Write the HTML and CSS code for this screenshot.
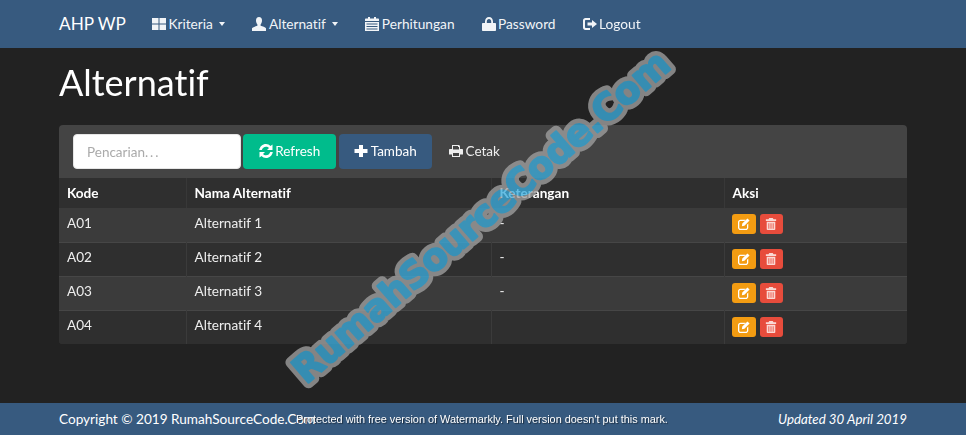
FILE: index.html
```html
<!DOCTYPE html>
<html lang="id">
<head>
<meta charset="utf-8">
<title>Alternatif</title>
<link rel="stylesheet" href="styles.css">
</head>
<body>
<svg class="defs" width="0" height="0" aria-hidden="true">
  <symbol id="i-th" viewBox="0 0 14 14"><path d="M0 1h6.500v5.500H0zM7.500 1H14v5.500H7.500zM0 7.500h6.500V13H0zM7.500 7.500H14V13H7.500z"/></symbol>
  <symbol id="i-user" viewBox="0 0 14 14"><path d="M7 0c2 0 3 1.500 3 3.400 0 1.700-.7 3.200-1.400 4.100v1.300c1.800.6 4.800 1.300 5.400 2.500V14H0v-2.700c.6-1.200 3.600-1.900 5.400-2.500V7.500C4.700 6.600 4 5.100 4 3.400 4 1.500 5 0 7 0z"/></symbol>
  <symbol id="i-cal" viewBox="0 0 14 14"><path fill-rule="evenodd" d="M3 0h2v1.500h4V0h2v1.500h2c.6 0 1 .4 1 1V4H0V2.500c0-.6.400-1 1-1h2zM0 5h14v9H0zM1.500 6.500v1h11v-1zM1.500 9v1h11V9zM1.500 11.500v1h11v-1z"/></symbol>
  <symbol id="i-lock" viewBox="0 0 14 14"><path fill-rule="evenodd" d="M1 6h2V4.500C3 1.800 4.600 0 7 0s4 1.800 4 4.500V6h2c.6 0 1 .4 1 1v6c0 .6-.4 1-1 1H1c-.6 0-1-.4-1-1V7c0-.6.400-1 1-1zm3.800 0h4.400V4.500C9.200 3 8.400 2 7 2S4.800 3 4.800 4.500z"/></symbol>
  <symbol id="i-out" viewBox="0 0 14 14"><path d="M2.500 1H7v2H3c-.6 0-1 .4-1 1v6c0 .6.400 1 1 1h4v2H2.500C1 13 0 12 0 10.500v-7C0 2 1 1 2.500 1zM9 3l5 4-5 4V8.500H4.500v-3H9z"/></symbol>
  <symbol id="i-refresh" viewBox="0 0 14 14"><path d="M7 0c1.800 0 3.400.8 4.500 2L13.500.5V6H8l2-2c-.7-.8-1.800-1.300-3-1.300C5 2.700 3.300 4 2.800 6H.2C.7 2.600 3.500 0 7 0zM.5 8H6l-2 2c.7.8 1.800 1.300 3 1.300 2 0 3.700-1.300 4.200-3.300h2.600c-.5 3.400-3.300 6-6.800 6-1.800 0-3.400-.8-4.500-2L.5 13.500z"/></symbol>
  <symbol id="i-plus" viewBox="0 0 14 14"><path d="M5 1h4v4h4.500v4H9v4H5V9H.5V5H5z"/></symbol>
  <symbol id="i-print" viewBox="0 0 14 14"><path fill-rule="evenodd" d="M3 1h7l1 1v3h2c.6 0 1 .4 1 1v4.500h-3V13H3v-2.500H0V6c0-.6.400-1 1-1h2zm1 1v3.500h6V3H9V2zm0 7v3h6V9z"/></symbol>
  <symbol id="i-edit" viewBox="0 0 14 14"><path d="M3 2h6L7.500 3.500H3c-.8 0-1.500.7-1.500 1.500v6c0 .8.700 1.500 1.500 1.500h6c.8 0 1.500-.7 1.500-1.500V8L12 6.500V11c0 1.700-1.300 3-3 3H3c-1.700 0-3-1.300-3-3V5c0-1.700 1.300-3 3-3zM11 .5L13.500 3 7.500 9 4.500 9.500 5 6.500z"/></symbol>
  <symbol id="i-trash" viewBox="0 0 14 14"><path fill-rule="evenodd" d="M5 0h4l1 1.500h3v2H1v-2h3zM2 4.500h10V13c0 .6-.4 1-1 1H3c-.6 0-1-.4-1-1zM4 6v6.500h1V6zM6.500 6v6.500h1V6zM9 6v6.500h1V6z"/></symbol>
</svg>

<nav class="navbar">
  <div class="wrap nav-inner">
    <a class="brand">AHP WP</a>
    <a class="nav-link"><svg class="ico"><use href="#i-th"/></svg>Kriteria <span class="caret"></span></a>
    <a class="nav-link"><svg class="ico"><use href="#i-user"/></svg>Alternatif <span class="caret"></span></a>
    <a class="nav-link"><svg class="ico"><use href="#i-cal"/></svg>Perhitungan</a>
    <a class="nav-link"><svg class="ico"><use href="#i-lock"/></svg>Password</a>
    <a class="nav-link"><svg class="ico"><use href="#i-out"/></svg>Logout</a>
  </div>
</nav>

<main class="wrap content">
  <h1 class="title">Alternatif</h1>
  <section class="panel">
    <div class="panel-head">
      <input class="search" type="text" placeholder="Pencarian. . .">
      <a class="btn btn-green"><svg class="ico"><use href="#i-refresh"/></svg>Refresh</a>
      <a class="btn btn-blue"><svg class="ico"><use href="#i-plus"/></svg>Tambah</a>
      <a class="btn btn-plain"><svg class="ico"><use href="#i-print"/></svg>Cetak</a>
    </div>
    <table class="grid">
      <colgroup><col class="c1"><col class="c2"><col class="c3"><col class="c4"></colgroup>
      <thead>
        <tr><th>Kode</th><th>Nama Alternatif</th><th>Keterangan</th><th>Aksi</th></tr>
      </thead>
      <tbody>
        <tr><td>A01</td><td>Alternatif 1</td><td>-</td><td class="acts"><a class="mini mini-edit"><svg><use href="#i-edit"/></svg></a><a class="mini mini-del"><svg><use href="#i-trash"/></svg></a></td></tr>
        <tr><td>A02</td><td>Alternatif 2</td><td>-</td><td class="acts"><a class="mini mini-edit"><svg><use href="#i-edit"/></svg></a><a class="mini mini-del"><svg><use href="#i-trash"/></svg></a></td></tr>
        <tr><td>A03</td><td>Alternatif 3</td><td>-</td><td class="acts"><a class="mini mini-edit"><svg><use href="#i-edit"/></svg></a><a class="mini mini-del"><svg><use href="#i-trash"/></svg></a></td></tr>
        <tr><td>A04</td><td>Alternatif 4</td><td></td><td class="acts"><a class="mini mini-edit"><svg><use href="#i-edit"/></svg></a><a class="mini mini-del"><svg><use href="#i-trash"/></svg></a></td></tr>
      </tbody>
    </table>
  </section>
</main>

<footer class="footer">
  <div class="wrap foot-inner">
    <span>Copyright © 2019 RumahSourceCode.Com</span>
    <em>Updated 30 April 2019</em>
  </div>
</footer>

<svg class="wm" viewBox="0 0 966 435">
  <g class="wm-group" transform="translate(306 385) rotate(-40.900)">
    <text class="wm-halo" x="0" y="0" textLength="485" lengthAdjust="spacing">RumahSourceCode.Com</text>
    <text class="wm-fill" x="0" y="0" textLength="485" lengthAdjust="spacing">RumahSourceCode.Com</text>
  </g>
</svg>
<div class="wm-note">Protected with free version of Watermarkly. Full version doesn't put this mark.</div>
</body>
</html>
```
FILE: styles.css
```css
* { box-sizing: border-box; }
html, body { margin: 0; height: 100%; }
body {
  position: relative;
  width: 966px;
  height: 435px;
  overflow: hidden;
  display: flex;
  flex-direction: column;
  background: #222;
  color: #fff;
  font-family: Lato, "Liberation Sans", sans-serif;
  font-size: 13.6px;
  font-variant-ligatures: none;
  filter: blur(.3px);
}
.defs { position: absolute; }
.wrap { width: 848px; margin: 0 auto; }

.navbar { height: 48px; background: #375a7f; flex: none; }
.nav-inner { display: flex; align-items: center; height: 47px; }
.brand { font-size: 17.2px; margin-right: 26px; }
.nav-link { display: flex; align-items: center; margin-right: 27px; font-size: 13.7px; color: #f1f4f7; }
.ico { width: 14px; height: 14px; fill: currentColor; margin-right: 2.500px; flex: none; }
.caret {
  display: inline-block;
  width: 0; height: 0;
  margin-left: 6.500px;
  border-top: 4px solid currentColor;
  border-left: 3.500px solid transparent;
  border-right: 3.500px solid transparent;
}

.content { flex: 1; }
.title { margin: 0; padding-top: 15px; height: 77px; font-size: 36px; line-height: 38px; font-weight: 400; }

.panel { background: #444; border-radius: 4px; overflow: hidden; height: 219px; }
.panel-head { height: 53px; display: flex; align-items: flex-start; padding: 9px 0 0 14px; }
.search {
  width: 168px; height: 35px;
  margin-right: 2px;
  padding: 0 13px;
  border: 1px solid #e6e6e6;
  border-radius: 4px;
  background: #fff;
  font: 13.5px Lato, sans-serif;
  word-spacing: -1.500px;
  color: #333;
}
.search::placeholder { color: #aaa; opacity: 1; }
.btn {
  display: flex; align-items: center; justify-content: center;
  width: 93px; height: 35px;
  padding-bottom: 2px;
  margin-right: 3px;
  border-radius: 4px;
  font-size: 13.5px;
}
.btn-green { background: #00bc8c; }
.btn-blue { background: #375a7f; }
.btn-plain { width: 79px; color: #eee; }

.grid { width: 848px; border-collapse: collapse; table-layout: fixed; background: #303030; }
.c1 { width: 127px; } .c2 { width: 305px; } .c3 { width: 233px; } .c4 { width: 183px; }
.grid th, .grid td { padding: 0 8px; text-align: left; border-left: 1px solid #3b3b3b; font-size: 13.6px; }
.grid th:first-child, .grid td:first-child { border-left: 0; }
.grid th { height: 30px; font-weight: 700; background: #2f2f2f; border-left-color: #383838; }
.grid td { height: 34px; border-top: 1px solid #464646; color: #eee; padding-bottom: 4px; }
.grid tbody tr:nth-child(odd) { background: #3b3b3b; }
.grid tbody tr:nth-child(even) { background: #2f2f2f; }
.grid tbody tr:first-child td { border-top: 0; }
.grid tbody tr:last-child td { border-bottom: 1px solid #464646; }
.grid td.acts { padding: 0 0 1px 7px; }

.mini {
  display: inline-flex; align-items: center; justify-content: center;
  width: 24px; height: 20px;
  border-radius: 3px;
  vertical-align: middle;
}
.mini svg { width: 12px; height: 12px; fill: #fff; }
.mini-edit { background: #f39c12; margin-right: 4px; }
.mini-del { width: 23px; background: #e74c3c; }
.mini-del svg { fill: #fbd9d5; }

.footer { height: 32px; background: #375a7f; flex: none; }
.foot-inner { display: flex; justify-content: space-between; align-items: center; height: 31px; font-size: 13.6px; }
.foot-inner em { font-size: 13.3px; }

.wm { position: absolute; left: 0; top: 0; width: 966px; height: 435px; pointer-events: none; }
.wm-group { opacity: .78; }
.wm text {
  font-family: "DejaVu Sans", sans-serif;
  font-weight: 700;
  font-size: 37px;
  stroke-linejoin: round;
  stroke-linecap: round;
}
.wm-halo { fill: #a0a0a0; stroke: #a0a0a0; stroke-width: 11px; }
.wm-fill { fill: #3cacdc; stroke: #3cacdc; stroke-width: 2px; }
.wm-note {
  position: absolute;
  left: 296px; top: 413px;
  font-family: "Liberation Sans", sans-serif;
  font-size: 10.900px;
  line-height: 13px;
  white-space: nowrap;
  color: #fff;
  text-shadow: 1px 1px 1px rgba(0,0,0,.5);
}
```
